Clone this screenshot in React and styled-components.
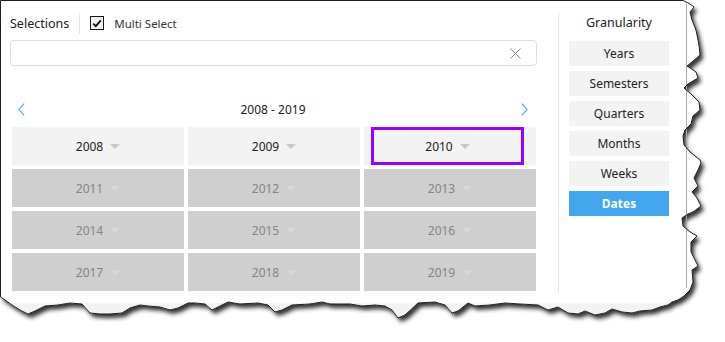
import React from 'react'
import styled, { createGlobalStyle } from 'styled-components'

const GlobalStyle = createGlobalStyle`
  html, body {
    margin: 0;
    padding: 0;
    background: #ffffff;
  }
  body {
    font-family: "Noto Sans", "Open Sans", Arial, sans-serif;
    color: #222;
  }
`

const Stage = styled.div`
  position: relative;
  width: 725px;
  height: 342px;
  overflow: hidden;
`

const Paper = styled.svg`
  position: absolute;
  left: 0;
  top: 0;
  z-index: 0;
`

const Window = styled.div`
  position: relative;
  z-index: 1;
  display: flex;
  box-sizing: border-box;
  width: 686px;
  padding: 12px 0 0 10px;
`

const LeftCol = styled.div`
  width: 527px;
  display: flex;
  flex-direction: column;
`

const Header = styled.div`
  display: flex;
  align-items: center;
  height: 22px;
`

const Title = styled.span`
  font-size: 12.5px;
  color: #222;
`

const Divider = styled.div`
  width: 1px;
  height: 21px;
  background: #e6e6e6;
  margin: 0 10px;
`

const CheckBox = styled.div`
  box-sizing: border-box;
  width: 14px;
  height: 14px;
  border: 1.5px solid #1a1a1a;
  background: #f2f2f2;
  display: flex;
  align-items: center;
  justify-content: center;
  margin-right: 10px;
`

const CheckLabel = styled.span`
  font-size: 11.5px;
  color: #333;
`

const Search = styled.div`
  box-sizing: border-box;
  margin-top: 6px;
  height: 26px;
  border: 1px solid #dedede;
  border-radius: 4px;
  display: flex;
  align-items: center;
  justify-content: flex-end;
  padding-right: 15px;
`

const Nav = styled.div`
  margin-top: 29px;
  height: 28px;
  display: flex;
  align-items: center;
  justify-content: space-between;
  padding: 0 9px 0 8px;
`

const Range = styled.span`
  font-size: 12px;
  color: #222;
`

const Grid = styled.div`
  margin: 4px 0 0 2px;
  width: 524px;
  display: grid;
  grid-template-columns: repeat(3, 1fr);
  grid-auto-rows: 38px;
  gap: 4px;
`

const Cell = styled.div`
  display: flex;
  align-items: stretch;
  background: ${p => (p.$disabled ? '#cfcfcf' : '#f3f3f3')};
  color: ${p => (p.$disabled ? '#858585' : '#222')};
  font-size: 12px;
`

const CellInner = styled.div`
  flex: 1;
  display: flex;
  align-items: center;
  justify-content: center;
  gap: 7px;
  box-sizing: border-box;
  margin: ${p => (p.$focused ? '0 12px 0 7px' : '0')};
  border: ${p => (p.$focused ? '3px solid #9a00ff' : 'none')};
`

const Caret = styled.span`
  width: 0;
  height: 0;
  border-left: 5px solid transparent;
  border-right: 5px solid transparent;
  border-top: 5px solid ${p => (p.$disabled ? '#d8d8d8' : '#c9c9c9')};
`

const RightCol = styled.div`
  margin: 1px 0 0 21px;
  height: 279px;
  border-left: 1px solid #e4e4e4;
  padding-left: 10px;
  display: flex;
  flex-direction: column;
  gap: 5px;
`

const GranTitle = styled.div`
  width: 100px;
  height: 20px;
  line-height: 20px;
  text-align: center;
  font-size: 12.5px;
  color: #222;
  margin-bottom: 3px;
`

const GranButton = styled.div`
  width: 100px;
  height: 25px;
  display: flex;
  align-items: center;
  justify-content: center;
  font-size: 12px;
  background: ${p => (p.$active ? '#42a6ef' : '#f3f3f3')};
  color: ${p => (p.$active ? '#fff' : '#222')};
  font-weight: ${p => (p.$active ? 700 : 400)};
`

const tornPath =
  'M0.5,0.5 L683,0.5 L690,4 L694,7 L690,12 L692,20 L696,30 L699,45 L700,55 L692,62 L687,66 L696,72 L698,78 L688,84 L684,88 L692,95 L699,102 L700,110 L693,116 L691,124 L685,130 L683,136 L684,145 L690,152 L700,160 L701,163 L698,170 L694,178 L698,186 L692,192 L697,198 L701,206 L693,212 L688,214 L682,218 L683,226 L690,232 L697,236 L691,242 L691,252 L696,262 L698,266 L692,270 L693,282 L690,290 L684,296 L678,300 L672,302 L668,305 L660,307 L652,310 L640,311 L632,313 L622,312 L612,309 L605,313 L595,315 L585,311 L578,314 L568,313 L558,307 L548,310 L538,305 L520,304 L505,303 L490,305 L475,306 L468,303 L458,311 L452,313 L445,305 L435,302 L418,303 L405,315 L398,318 L392,310 L385,306 L375,305 L362,306 L350,304 L330,304 L322,302 L310,304 L292,305 L282,310 L275,312 L268,305 L258,303 L240,304 L228,302 L218,307 L212,310 L205,304 L195,303 L188,303 L178,308 L170,310 L160,307 L148,306 L140,305 L130,308 L122,313 L110,314 L100,314 L90,313 L82,304 L70,303 L58,305 L45,306 L35,311 L28,314 L20,310 L12,305 L5,300 L0.5,297 Z'

const years = [
  [2008, 2009, 2010],
  [2011, 2012, 2013],
  [2014, 2015, 2016],
  [2017, 2018, 2019],
]

const granularity = ['Years', 'Semesters', 'Quarters', 'Months', 'Weeks', 'Dates']

export default function App() {
  return (
    <Stage>
      <GlobalStyle />
      <Paper width="725" height="342" viewBox="0 0 725 342">
        <defs>
          <filter id="tornShadow" x="-5%" y="-5%" width="115%" height="120%">
            <feDropShadow dx="3" dy="4" stdDeviation="2" floodColor="#262626" floodOpacity="0.95" />
          </filter>
          <clipPath id="paperClip">
            <path d={tornPath} />
          </clipPath>
        </defs>
        <path d={tornPath} fill="#fff" filter="url(#tornShadow)" />
        <rect x="0" y="303" width="700" height="40" fill="#f3f3f3" clipPath="url(#paperClip)" />
        <line x1="686.5" y1="4" x2="686.5" y2="288" stroke="#a9a9a9" strokeWidth="1" />
        <path d={tornPath} fill="none" stroke="#1e1e1e" strokeWidth="1" />
      </Paper>
      <Window>
        <LeftCol>
          <Header>
            <Title>Selections</Title>
            <Divider />
            <CheckBox>
              <svg width="10" height="9" viewBox="0 0 10 9">
                <path d="M1.2 4.6 L3.8 7.2 L8.8 1.4" fill="none" stroke="#111" strokeWidth="1.8" />
              </svg>
            </CheckBox>
            <CheckLabel>Multi Select</CheckLabel>
          </Header>
          <Search>
            <svg width="11" height="11" viewBox="0 0 11 11">
              <path d="M0.5 0.5 L10.5 10.5 M10.5 0.5 L0.5 10.5" stroke="#8a8a8a" strokeWidth="1" />
            </svg>
          </Search>
          <Nav>
            <svg width="7" height="13" viewBox="0 0 7 13">
              <path d="M6.2 0.6 L0.9 6.5 L6.2 12.4" fill="none" stroke="#42a6ef" strokeWidth="1.1" />
            </svg>
            <Range>2008 - 2019</Range>
            <svg width="7" height="13" viewBox="0 0 7 13">
              <path d="M0.8 0.6 L6.1 6.5 L0.8 12.4" fill="none" stroke="#42a6ef" strokeWidth="1.1" />
            </svg>
          </Nav>
          <Grid>
            {years.map((row, r) =>
              row.map(y => (
                <Cell key={y} $disabled={r > 0}>
                  <CellInner $focused={y === 2010}>
                    <span>{y}</span>
                    <Caret $disabled={r > 0} />
                  </CellInner>
                </Cell>
              ))
            )}
          </Grid>
        </LeftCol>
        <RightCol>
          <GranTitle>Granularity</GranTitle>
          {granularity.map(g => (
            <GranButton key={g} $active={g === 'Dates'}>
              {g}
            </GranButton>
          ))}
        </RightCol>
      </Window>
    </Stage>
  )
}
